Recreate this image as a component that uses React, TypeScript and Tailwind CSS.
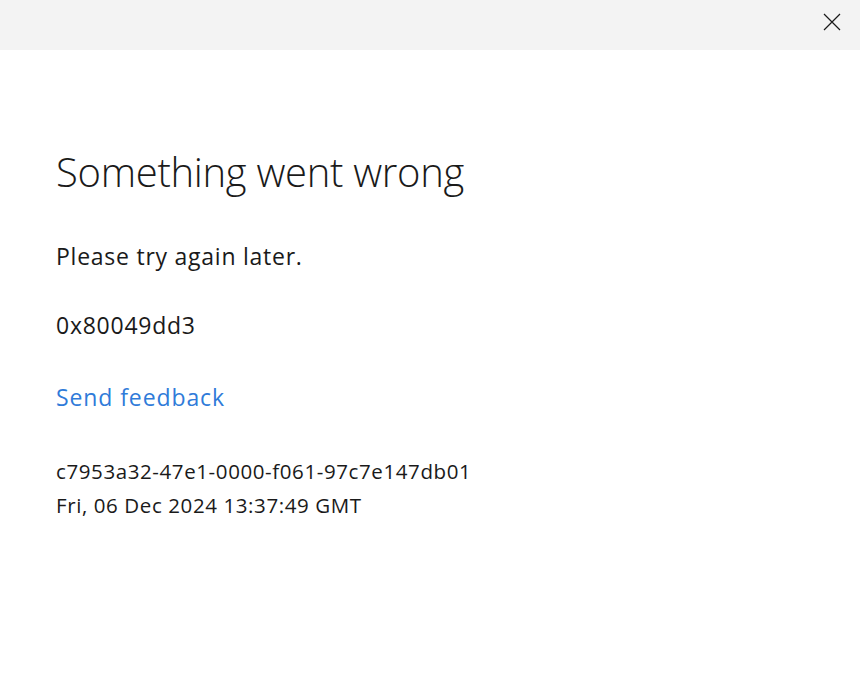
export default function App() {
  return (
    <div className="w-[860px] h-[674px] bg-white flex flex-col text-[#1a1a1a] font-['Open_Sans',sans-serif]">
      <div className="h-[50px] bg-[#f3f3f3] flex justify-end items-start pt-[7px] pr-[13px]">
        <button type="button" className="w-[30px] h-[30px] flex items-center justify-center">
          <svg width="18" height="18" viewBox="0 0 18 18" fill="none" stroke="#1a1a1a" strokeWidth="1.2">
            <path d="M1 1 L17 17 M17 1 L1 17" />
          </svg>
        </button>
      </div>
      <div className="pl-[56px] pt-[98px] flex flex-col items-start">
        <h1 className="text-[40px] font-light leading-[48px] tracking-[-0.3px]">Something went wrong</h1>
        <p className="mt-[46px] text-[23px] leading-[28px] tracking-[0.75px]">Please try again later.</p>
        <p className="mt-[41px] text-[23px] leading-[28px] tracking-[0.75px]">0x80049dd3</p>
        <a className="mt-[44px] text-[23px] leading-[28px] tracking-[0.9px] text-[#2f7bd9]" href="#">
          Send feedback
        </a>
        <div className="mt-[43px] text-[20.5px] leading-[34px] tracking-[0.6px]">
          <div>c7953a32-47e1-0000-f061-97c7e147db01</div>
          <div>Fri, 06 Dec 2024 13:37:49 GMT</div>
        </div>
      </div>
    </div>
  );
}
